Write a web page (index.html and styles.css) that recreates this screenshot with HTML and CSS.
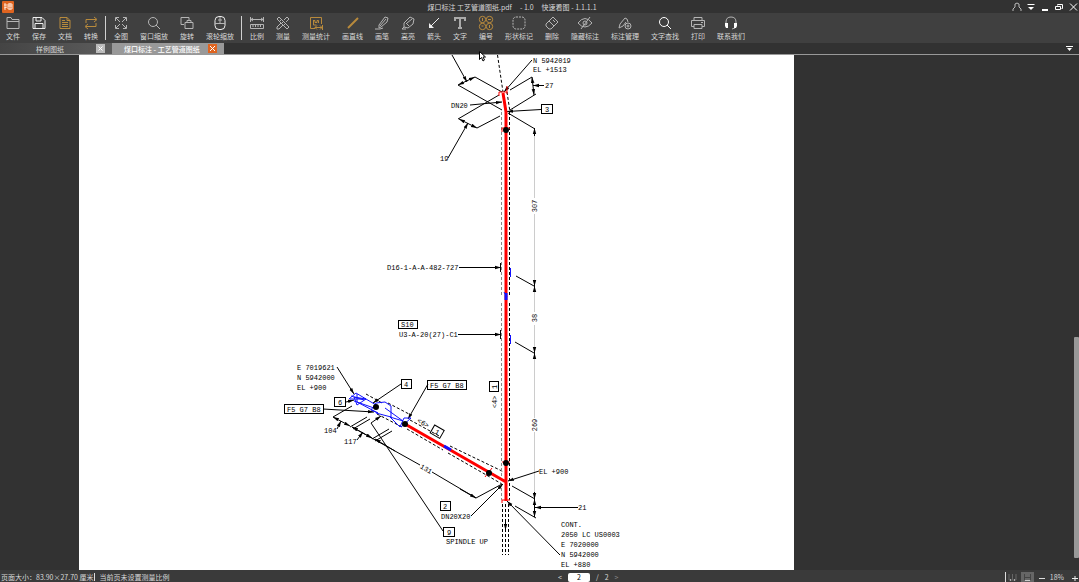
FILE: index.html
```html
<!DOCTYPE html>
<html lang="zh-CN">
<head>
<meta charset="utf-8">
<title>快速看图</title>
<link rel="stylesheet" href="styles.css">
</head>
<body>
<header class="titlebar">
  <svg class="logo" viewBox="0 0 12 12"><rect width="12" height="12" rx="1" fill="#df6420"/><path d="M2 4h3M3 2v7M2 7l3-1M6 3h4v5H6zM8 2v7M6 5h4" fill="none" stroke="#ffe3d2"/></svg>
  <h1 class="title"><span>煤口标注 工艺管道图纸.pdf</span><span>- 1.0</span><span>快速看图 - 1.1.1.1</span></h1>
  <nav class="window-buttons">
    <button aria-label="用户"><svg viewBox="0 0 10 10"><path d="M3 5V2l2-1 2 1v3M1 9V7l2-2M7 5l2 2v2" stroke="#bbb"/></svg></button>
    <button aria-label="菜单"><svg viewBox="0 0 10 10"><path d="M1.500 2.500h7"/><path d="M2 5h6L5 8z" fill="#fff" stroke="none"/></svg></button>
    <button aria-label="最小化"><svg viewBox="0 0 10 10"><path d="M2 8h6" stroke-width="2"/></svg></button>
    <button aria-label="还原"><svg viewBox="0 0 10 10"><path d="M3.500 3.500v-1h5v4h-1M1.500 4.500h5v3h-5z"/></svg></button>
    <button aria-label="关闭"><svg viewBox="0 0 10 10"><path d="M2 1.500l7 7M9 1.500l-7 7"/></svg></button>
  </nav>
</header>

<nav class="toolbar">
  <button class="tool"><svg viewBox="0 0 16 16"><path d="M2 13.500v-11h4l1 2h7v9zM2 6.500h12"/></svg>文件</button>
  <button class="tool"><svg viewBox="0 0 16 16"><path d="M2 2.500h9l3 3v8H2zM4 13V8.500h8V13M5 3v3h5V3" stroke="#eee"/></svg>保存</button>
  <button class="tool gold"><svg viewBox="0 0 16 16"><path d="M3 2.500h7l3 3v8H3zM10 2.500v3h3M5 7.500h6M5 9.500h6M5 11.500h6M5 5.500h3"/></svg>文档</button>
  <button class="tool gold"><svg viewBox="0 0 16 16"><path d="M3 8V4.500h10M11 2l3 2.500L11 7M13 8v3.500H3M5 9l-3 2.500L5 14"/></svg>转换</button>
  <span class="divider"></span>
  <button class="tool"><svg viewBox="0 0 16 16"><path d="M2.500 6V2.500H6M3 3l4 4M10 2.500h3.500V6M13 3L9 7M2.500 10v3.500H6M3 13l4-4M10 13.500h3.500V10M13 13L9 9"/></svg>全图</button>
  <button class="tool"><svg viewBox="0 0 16 16"><circle cx="7" cy="7" r="4.500"/><path d="M10 10l4 4"/></svg>窗口缩放</button>
  <button class="tool"><svg viewBox="0 0 16 16"><path d="M5 9.500H2v-7h8V5M6 7.500h8v6H6zM8 7V5.500h4V7"/></svg>旋转</button>
  <button class="tool"><svg viewBox="0 0 16 16"><rect x="3" y="1.500" width="10" height="13" rx="4" stroke="#eee"/><path d="M3 8.500h10M8 2v2M6 5h4M8 4v4"/></svg>滚轮缩放</button>
  <span class="divider"></span>
  <button class="tool"><svg viewBox="0 0 16 16"><path d="M1.500 2v5M14.500 2v5M2 4.500h12M4 3L2 4.500 4 6M12 3l2 1.500L12 6M1.500 9.500h13v4h-13zM4 10v2M6.500 10v2M9 10v2M11.500 10v2"/></svg>比例</button>
  <button class="tool"><svg viewBox="0 0 16 16"><path d="M2 4l2-2 10 10-2 2zM5 6l1-1M7 8l1-1M9 10l1-1M14 4l-2-2-3 3M6 8l-4 4v2h2l4-4M11 7l3-3"/></svg>测量</button>
  <button class="tool gold"><svg viewBox="0 0 16 16"><path d="M7 13.500H2.500v-11h11V9M5.500 5v5h3M5.500 5.500H7v2h2v-2h1.500V8M7 12.500h7M9 10.500l-2 2 2 2M12 10.500l2 2-2 2M14.500 10v5"/></svg>测量统计</button>
  <button class="tool gold"><svg viewBox="0 0 16 16"><path d="M3 13L13 3" stroke-width="2"/></svg>画直线</button>
  <button class="tool"><svg viewBox="0 0 16 16"><path d="M5 10l6-8 3 1-1 4-6 5-2 1zM6 11l6-7M1 14h5l3-1"/></svg>画笔</button>
  <button class="tool"><svg viewBox="0 0 16 16"><path d="M4 8l6-6 4 2-1 5-5 4-4-1zM6 8l3 3M4 12l-2 2h4M7 8l5-4"/></svg>高亮</button>
  <button class="tool"><svg viewBox="0 0 16 16"><path d="M13 3L5 11" stroke="#eee"/><path d="M3 13V8l5 5z" fill="#eee" stroke="none"/></svg>箭头</button>
  <button class="tool"><svg viewBox="0 0 16 16"><path d="M3 6V3h10v3M8 3v10M6 13h4" stroke="#aaa" stroke-width="2"/></svg>文字</button>
  <button class="tool gold"><svg viewBox="0 0 16 16"><circle cx="4.500" cy="4.500" r="3.200"/><circle cx="11.500" cy="4.500" r="3.200"/><circle cx="4.500" cy="11.500" r="3.200"/><circle cx="11.500" cy="11.500" r="3.200"/><path d="M4.500 3v3M10 4.500h3M3.500 11h2M11.500 10v3"/></svg>编号</button>
  <button class="tool"><svg viewBox="0 0 16 16"><rect x="2" y="2" width="12" height="12" rx="3" stroke-dasharray="2 1"/></svg>形状标记</button>
  <button class="tool"><svg viewBox="0 0 16 16"><path d="M2 9l7-7 5 5-7 7H5l-3-3zM5 6l5 5M9 5l2 2"/></svg>删除</button>
  <button class="tool"><svg viewBox="0 0 16 16"><path d="M1 8q7-9 14 0-7 8-14 0M13 2L4 14"/><circle cx="8" cy="8" r="2"/></svg>隐藏标注</button>
  <button class="tool"><svg viewBox="0 0 16 16"><path d="M2 13l1-4 5-6 2 1 1 3M2 13l4-2 3-4"/><circle cx="11" cy="11" r="3"/><circle cx="11" cy="11" r="1"/></svg>标注管理</button>
  <button class="tool"><svg viewBox="0 0 16 16"><circle cx="7" cy="7" r="4.500" stroke="#fff"/><path d="M10 10l4 4" stroke="#fff"/></svg>文字查找</button>
  <button class="tool"><svg viewBox="0 0 16 16"><path d="M4 5V2.500h8V5M4 11.500H1.500v-6h13v6H12M4 9.500h8v4H4zM11 7.500h2"/></svg>打印</button>
  <button class="tool"><svg viewBox="0 0 16 16"><path d="M3 9V7q0-5 5-5t5 5v2M12 13l-3 1"/><path d="M2 8h3v5H3l-1-2zM11 8h3v3l-1 2h-2z" fill="#fff" stroke="none"/></svg>联系我们</button>
</nav>

<nav class="tabs">
  <div class="tab"><a href="#sample">样例图纸</a><button class="close" aria-label="关闭样例图纸"><svg viewBox="0 0 9 9"><path d="M2.500 2.500l4 4M6.500 2.500l-4 4"/></svg></button></div>
  <div class="tab active"><a href="#drawing">煤口标注 - 工艺管道图纸</a><button class="close" aria-label="关闭工艺管道图纸"><svg viewBox="0 0 9 9"><path d="M2 2l5 5M7 2l-5 5"/></svg></button></div>
  <button class="tab-menu" aria-label="标签列表"><svg viewBox="0 0 9 9"><path d="M1 2.500h7" stroke="#fff"/><path d="M2 4h5L4.500 7z" fill="#fff"/></svg></button>
</nav>

<main class="workspace" id="drawing">
  <div class="sheet">
  <svg class="drawing" viewBox="79 55 715 515">
    <defs>
      <marker id="arrow" viewBox="0 0 7 5" refX="7" refY="2.500" markerWidth="6" markerHeight="5" markerUnits="userSpaceOnUse" orient="auto-start-reverse"><path d="M0 0.500L7 2.500 0 4.500z" fill="#000"/></marker>
    </defs>

    <g class="dim-rail"><path d="M534.500 129V198M534.500 214V312M534.500 325V418M534.500 432V517"/></g>

    <g class="dashed">
      <path d="M497.500 55L503 92M507 92L510 112M509.500 112V295M509.500 303V500M508.500 504V555M505.500 504V555M502.500 504V555"/>
      <path d="M366 394L382 403M388 403L409 414M410 420L441 437M450 446L504 472M377 414L402 427M407 429L443 450M448 453L502 484"/>
      <path class="soft" d="M501.500 112V295M501.500 303V500"/>
    </g>

    <g class="thin">
      <path d="M458 85L502 110M475 77L502 92M458 119L499 95M477 128L500 116M510 90L532 77M510 110L536 94M508 113L535 129M516 276L534 286M515 342L534 353M512 486L535 499M515 506L536 518M476 498L502 484"/>
      <path d="M333 417L352 406M350 427L367 417M353 429L370 419M372 439L389 429M375 441L392 431M352 427L420 465M432 472L476 498"/>
      <path marker-end="url(#arrow)" d="M452 55L467 82"/>
      <path marker-start="url(#arrow)" marker-end="url(#arrow)" d="M458 85L475 77"/>
      <path marker-start="url(#arrow)" marker-end="url(#arrow)" d="M459 119L477 128"/>
      <path marker-end="url(#arrow)" d="M448 158L468 123"/>
      <path marker-end="url(#arrow)" d="M470 105L502 102"/>
      <path marker-end="url(#arrow)" d="M532 60L504 92"/>
      <path marker-start="url(#arrow)" marker-end="url(#arrow)" d="M532 77L534 95"/>
      <path marker-end="url(#arrow)" d="M544 85.500H533"/>
      <path marker-end="url(#arrow)" d="M541 109.500L507 111.500"/>
      <path marker-end="url(#arrow)" d="M459 267.500H501"/>
      <path marker-end="url(#arrow)" d="M458 334.500H501"/>
      <path marker-end="url(#arrow)" d="M534.500 136V128"/>
      <path marker-end="url(#arrow)" d="M534.500 280V286"/><path marker-end="url(#arrow)" d="M534.500 292V286"/>
      <path marker-end="url(#arrow)" d="M534.500 347V353"/><path marker-end="url(#arrow)" d="M534.500 359V353"/>
      <path marker-end="url(#arrow)" d="M534.500 492V499"/>
      <path marker-start="url(#arrow)" marker-end="url(#arrow)" d="M534.500 499V517"/>
      <path marker-end="url(#arrow)" d="M578 507.500H535"/>
      <path marker-end="url(#arrow)" d="M337 367L354 394"/>
      <path marker-end="url(#arrow)" d="M401 384L373 403"/>
      <path marker-end="url(#arrow)" d="M428 384L408 419"/>
      <path marker-end="url(#arrow)" d="M323 409L374 412"/>
      <path marker-end="url(#arrow)" d="M346 402L354 400"/>
      <path marker-end="url(#arrow)" d="M337 429L341 421"/>
      <path marker-end="url(#arrow)" d="M357 440L363 432"/>
      <path marker-start="url(#arrow)" marker-end="url(#arrow)" d="M333 417L350 426"/>
      <path marker-start="url(#arrow)" marker-end="url(#arrow)" d="M352 427L372 438"/>
      <path marker-start="url(#arrow)" d="M375 439L395 451"/>
      <path marker-end="url(#arrow)" d="M460 489L476 498"/>
      <path marker-end="url(#arrow)" d="M443 531L371 423L381 416"/>
      <path marker-end="url(#arrow)" d="M471 516L503 484"/>
      <path marker-end="url(#arrow)" d="M539 471L508 481"/>
      <path marker-end="url(#arrow)" d="M560 555L507 501"/>
      <path marker-end="url(#arrow)" d="M505.500 519V530"/>
      <path d="M500.500 263V272M500.500 330V339"/>
    </g>

    <g class="pipe"><path d="M503 93L506 112V501M405 424L506 482"/></g>
    <g class="pipe-ends"><path d="M499 96V92H507M507 86V94M502 132V128H510M502 462H510M502 503V500H510M485 477L492 468"/></g>
    <g class="blue">
      <path d="M504 292l3 5M510.500 268V277M510.500 335V344"/>
      <path class="mark" d="M444 446L451 450M506 293V300"/>
      <path d="M349 399L356 393 366 399 376 405M350 399H366L357 405 354 397 366 399M351 396L364 400M357 394V402L378 413 371 410 376 403 385 402 391 406V417L376 413M385 408L403 421 390 417 400 427 404 418H411L401 427M354 401L374 408"/>
    </g>
    <g class="joints"><circle cx="506" cy="130" r="3"/><circle cx="506" cy="463" r="3"/><circle cx="376" cy="407" r="3"/><circle cx="405" cy="424" r="3"/><circle cx="489" cy="473" r="3"/></g>

    <g class="boxes">
      <rect x="541.500" y="104.500" width="11" height="9"/><rect x="398.500" y="320.500" width="19" height="8"/>
      <rect x="489.500" y="381.500" width="9" height="10"/><rect x="401.500" y="379.500" width="10" height="9"/>
      <rect x="427.500" y="380.500" width="39" height="9"/><rect x="284.500" y="404.500" width="39" height="9"/>
      <rect x="334.500" y="397.500" width="11" height="9"/><rect x="440.500" y="501.500" width="10" height="9"/>
      <rect x="443.500" y="527.500" width="11" height="9"/>
      <rect x="432" y="427" width="11" height="9" transform="rotate(30 437 431)"/>
    </g>

    <g class="notes">
      <text x="533" y="63">N 5942019</text><text x="533" y="72">EL +1513</text><text x="545" y="88">27</text>
      <text x="451" y="108">DN20</text><text x="545" y="112">3</text><text x="440" y="161">19</text>
      <text x="387" y="270">D16-1-A-A-482-727</text><text x="401" y="327">S10</text><text x="399" y="337">U3-A-20(27)-C1</text>
      <text x="297" y="370">E 7019621</text><text x="297" y="380">N 5942000</text><text x="297" y="390">EL +900</text>
      <text x="404" y="387">4</text><text x="430" y="388">F5 G7 B8</text><text x="287" y="412">F5 G7 B8</text><text x="338" y="405">6</text>
      <text x="324" y="433">104</text><text x="344" y="444">117</text>
      <text x="443" y="509">2</text><text x="441" y="519">DN20X20</text><text x="447" y="535">9</text><text x="446" y="544">SPINDLE UP</text>
      <text x="539" y="474">EL +900</text><text x="578" y="510">21</text>
      <text x="561" y="527">CONT.</text><text x="561" y="537">2050 LC US0003</text><text x="561" y="547">E 7020000</text><text x="561" y="557">N 5942000</text><text x="561" y="567">EL +880</text>
      <g class="mid">
        <text transform="translate(537 206) rotate(-90)">307</text><text transform="translate(537 318) rotate(-90)">38</text>
        <text transform="translate(537 425) rotate(-90)">269</text><text transform="translate(497 387) rotate(-90)">1</text>
        <text transform="translate(497 402) rotate(-90)">&lt;4&gt;</text><text transform="translate(425 471) rotate(30)">131</text>
        <text transform="translate(422 425) rotate(30)">&lt;6&gt;</text><text transform="translate(436 434) rotate(30)">1</text>
      </g>
    </g>
  </svg>
  </div>
  <div class="scroll-track"><span class="scroll-thumb"></span></div>
  <svg class="cursor" viewBox="0 0 7 11"><path d="M.5.500v8l2-2 1.500 3.500 1.500-1L4 6h2.500z" fill="#fff" stroke="#000"/></svg>
</main>

<footer class="statusbar">
  <div class="status-left"><span class="page-size">页面大小：83.90×27.70 厘米</span><span class="status-note">当前页未设置测量比例</span></div>
  <div class="status-right">
    <div class="pager"><button aria-label="上一页">&lt;</button><input aria-label="页码" value="2"><span>/</span><span>2</span><button class="dim" aria-label="下一页">&gt;</button></div>
    <div class="zoom">
      <button class="view" aria-label="适合页面"><svg viewBox="0 0 9 9"><path d="M1 1v6h7V1M4.500 1v6" stroke="#666"/><path d="M2.500 6v2M6.500 6v2" stroke="#aaa"/></svg></button>
      <button class="view on" aria-label="适合宽度"><svg viewBox="0 0 9 9"><path d="M1.500 1v6M7.500 1v6M2 4.500h5" stroke="#444"/><path d="M2 7.500h5" stroke="#ccc"/></svg></button>
      <button class="step" aria-label="缩小"><svg viewBox="0 0 9 9"><path d="M2 5.500h6" stroke="#ddd"/></svg></button>
      <span class="percent">18%</span>
      <button class="step" aria-label="放大"><svg viewBox="0 0 9 9"><path d="M2 5.500h6M5 3v5" stroke="#eee"/></svg></button>
    </div>
  </div>
</footer>
</body>
</html>
```

FILE: styles.css
```css
* { box-sizing: border-box; }
body {
  margin: 0; height: 100vh; display: flex; flex-direction: column; overflow: hidden;
  background: #323232; color: #d8d8d8;
  font: 7px/8px "Noto Sans CJK SC", sans-serif;
}
button { border: 0; padding: 0; margin: 0; background: none; color: inherit; font: inherit; }
svg { display: block; fill: none; }
a { color: inherit; text-decoration: none; }

.titlebar { flex: none; height: 13px; display: grid; grid-template-columns: 1fr auto 1fr; align-items: center; padding: 0 1px 0 2px; }
.logo { width: 12px; height: 12px; }
.title { margin: 0; font-size: 7px; font-weight: 400; display: flex; gap: 8px; padding-right: 56px; }
.window-buttons { display: flex; justify-content: flex-end; gap: 4px; }
.window-buttons svg { width: 10px; height: 10px; stroke: #fff; }

.toolbar { flex: none; height: 30px; display: flex; background: #404040; }
.tool { flex: none; padding: 2px 6px 0; display: flex; flex-direction: column; align-items: center; gap: 1px; white-space: nowrap; }
.tool svg { width: 16px; height: 16px; margin: 0 -1px; stroke: #b5b5b5; }
.tool.gold svg { stroke: #b88a3c; }
.divider { flex: none; width: 1px; margin: 3px 2px 3px 1px; background: #d0d0d0; }

.tabs { flex: none; height: 12px; display: flex; border-bottom: 1px solid #999; padding-right: 5px; }
.tab { width: 112px; display: flex; align-items: center; justify-content: space-between; padding: 0 7px 0 36px; background: linear-gradient(90deg, #444, #5c5c5c); }
.tab.active { background: #999; color: #fff; padding-left: 12px; font-weight: 500; }
.close { background: #bbb; }
.close svg { width: 9px; height: 9px; stroke: #fff; }
.active .close { background: #df6420; }
.tab-menu { margin-left: auto; }
.tab-menu svg { width: 9px; height: 9px; }

.workspace { position: relative; flex: 1; min-height: 0; display: grid; grid-template-columns: 79fr 715fr 285fr; }
.sheet { grid-column: 2; min-height: 0; background: #fff; }
.drawing { width: 100%; height: 100%; }
.scroll-track { display: flex; flex-direction: column; justify-content: flex-end; align-items: flex-end; padding-bottom: 12px; }
.scroll-thumb { width: 5px; height: 44%; border-radius: 1px; background: #999; }
.cursor { position: absolute; left: 479px; top: -4px; width: 7px; height: 11px; }

.dim-rail path { stroke: #ccc; }
.dashed path { stroke: #000; stroke-dasharray: 3 2; }
.dashed .soft { stroke: #888; }
.thin path { stroke: #000; stroke-width: 1; }
.pipe path { stroke: #f00; stroke-width: 3; }
.pipe-ends path { stroke: #f00; }
.blue path { stroke: #11f; stroke-width: 1; }
.blue .mark { stroke-width: 3; }
.joints { fill: #000; }
.boxes rect { stroke: #000; }
.notes { fill: #000; font: 7px "Liberation Mono", monospace; }
.mid { text-anchor: middle; }

.statusbar { flex: none; height: 12px; display: grid; grid-template-columns: 558fr 521fr; background: #3a3a3a; }
.status-left, .status-right, .pager, .zoom { display: flex; align-items: center; }
.status-left { padding-top: 2px; }
.page-size { padding-left: 1px; border-right: 1px solid #ddd; white-space: nowrap; }
.status-note { padding-left: 5px; }
.status-right { justify-content: space-between; padding-top: 2px; }
.pager { gap: 6px; }
.pager input { width: 22px; height: 9px; border: 0; border-radius: 2px; padding: 0; text-align: center; font: inherit; background: #fff; color: #000; }
.dim { color: #888; }
.zoom { border-left: 1px solid #ddd; gap: 2px; }
.view { width: 13px; height: 10px; display: grid; place-items: center; }
.view.on { background: #666; }
.view svg, .step svg { width: 9px; height: 9px; }
.step { margin-left: 1px; }
.percent { margin: 0 3px 0 2px; }
```
